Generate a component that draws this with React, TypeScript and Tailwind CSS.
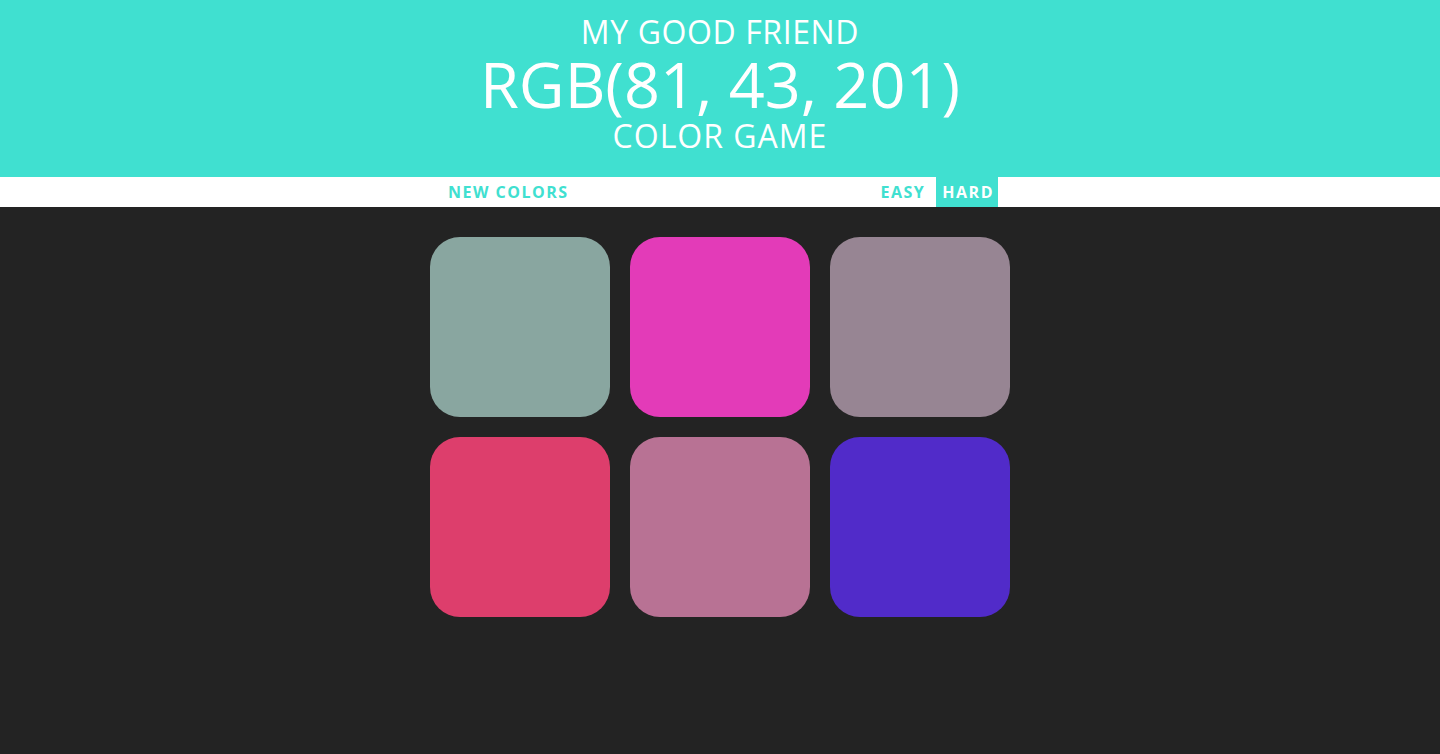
const squares = ["#89a6a0", "#e33bb8", "#978593", "#dd3e6c", "#b87294", "#512bc9"];

export default function App() {
  return (
    <div className="min-h-[754px] bg-[#232323]" style={{ fontFamily: '"Open Sans", sans-serif' }}>
      {/* Header */}
      <header className="h-[177px] bg-[#40e0d0] text-white text-center flex flex-col items-center pt-[14px] uppercase font-normal">
        <div className="text-[32px] leading-[36px] tracking-[0.6px]">My Good Friend</div>
        <div className="text-[63px] leading-[68px]">RGB(81, 43, 201)</div>
        <div className="text-[32px] leading-[36px] tracking-[1px]">Color Game</div>
      </header>

      {/* Stripe */}
      <nav className="h-[30px] bg-white">
        <div className="w-[600px] mx-auto h-full flex items-stretch text-[16px] font-bold tracking-[1.5px]">
          <button className="ml-[22px] px-[6px] uppercase text-[#40e0d0]">New Colors</button>
          <div className="flex-1" />
          <button className="mr-[5px] px-[6px] uppercase text-[#40e0d0]">Easy</button>
          <button className="mr-[22px] pl-[6px] pr-[4px] uppercase bg-[#40e0d0] text-white">Hard</button>
        </div>
      </nav>

      {/* Squares */}
      <main className="w-[600px] mx-auto pt-[20px] grid grid-cols-3">
        {squares.map((c) => (
          <div key={c} className="m-[10px] w-[180px] h-[180px] rounded-[30px]" style={{ backgroundColor: c }} />
        ))}
      </main>
    </div>
  );
}
